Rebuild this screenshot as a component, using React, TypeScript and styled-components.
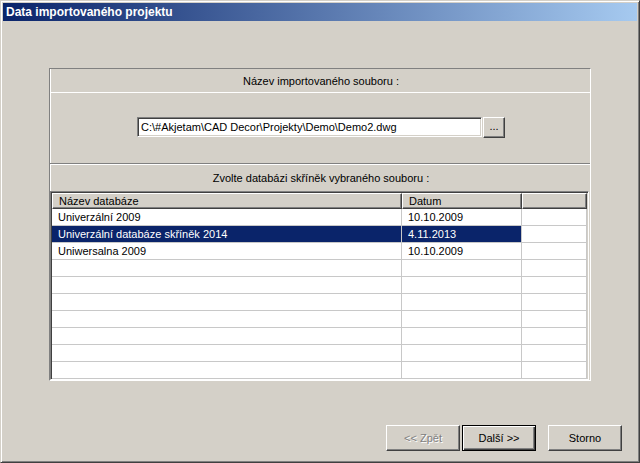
import React from 'react';
import styled, { createGlobalStyle } from 'styled-components';

const GlobalStyle = createGlobalStyle`
  html, body {
    margin: 0;
    padding: 0;
    background: #d4d0c8;
  }
  * {
    box-sizing: border-box;
  }
`;

type Row = { name: string; date: string; selected?: boolean };

const rows: Row[] = [
  { name: 'Univerzální 2009', date: '10.10.2009' },
  { name: 'Univerzální databáze skříněk 2014', date: '4.11.2013', selected: true },
  { name: 'Uniwersalna 2009', date: '10.10.2009' },
  { name: '', date: '' },
  { name: '', date: '' },
  { name: '', date: '' },
  { name: '', date: '' },
  { name: '', date: '' },
  { name: '', date: '' },
  { name: '', date: '' },
];

const App = () => {
  return (
    <>
      <GlobalStyle />
      <Window>
        <TitleBar>Data importovaného projektu</TitleBar>
        <Content>
          <Panel>
            <SectionHeader $height={23}>Název importovaného souboru :</SectionHeader>
            <FileSection>
              <PathInput>C:\#Akjetam\CAD Decor\Projekty\Demo\Demo2.dwg</PathInput>
              <BrowseButton>...</BrowseButton>
            </FileSection>
            <SectionHeader $height={27} $raised>
              Zvolte databázi skříněk vybraného souboru :
            </SectionHeader>
            <ListView>
              <HeaderRow>
                <HeaderCell>Název databáze</HeaderCell>
                <HeaderCell>Datum</HeaderCell>
                <HeaderCell />
              </HeaderRow>
              {rows.map((row, i) => (
                <DataRow key={i}>
                  <Cell $selected={row.selected}>{row.name}</Cell>
                  <Cell $selected={row.selected}>{row.date}</Cell>
                  <Cell />
                </DataRow>
              ))}
            </ListView>
          </Panel>
          <Footer>
            <Button disabled>&lt;&lt; Zpět</Button>
            <Button $default>Další &gt;&gt;</Button>
            <Button $wide>Storno</Button>
          </Footer>
        </Content>
      </Window>
    </>
  );
};

export default App;

const Window = styled.div`
  width: 640px;
  height: 463px;
  display: flex;
  flex-direction: column;
  padding: 2px;
  background: #d4d0c8;
  border: 1px solid;
  border-color: #d4d0c8 #404040 #404040 #d4d0c8;
  box-shadow: inset 1px 1px 0 #ffffff, inset -1px -1px 0 #808080;
  font-family: 'Liberation Sans', Arial, sans-serif;
  font-size: 11px;
  color: #000000;
`;

const TitleBar = styled.div`
  height: 18px;
  flex-shrink: 0;
  display: flex;
  align-items: center;
  padding-left: 3px;
  background: linear-gradient(to right, #0a246a, #a6caf0);
  color: #ffffff;
  font-weight: bold;
  font-size: 12px;
`;

const Content = styled.div`
  flex: 1;
  display: flex;
  flex-direction: column;
  padding: 47px 0 0 46px;
`;

const Panel = styled.div`
  width: 542px;
  display: flex;
  flex-direction: column;
  border: 1px solid;
  border-color: #808080 #ffffff #ffffff #808080;
  box-shadow: inset 1px 0 0 #ffffff;
`;

const SectionHeader = styled.div<{ $height: number; $raised?: boolean }>`
  height: ${(p) => p.$height}px;
  display: flex;
  align-items: center;
  justify-content: center;
  padding-left: 2px;
  border-top: ${(p) => (p.$raised ? '1px solid #ffffff' : 'none')};
`;

const FileSection = styled.div`
  height: 72px;
  display: flex;
  align-items: center;
  justify-content: center;
  padding: 0 0 2px 2px;
  border-top: 1px solid #ffffff;
  border-bottom: 1px solid #808080;
`;

const PathInput = styled.div`
  width: 345px;
  height: 20px;
  display: flex;
  align-items: center;
  padding-left: 3px;
  background: #ffffff;
  border: 1px solid;
  border-color: #808080 #ffffff #ffffff #808080;
  box-shadow: inset 1px 1px 0 #404040, inset -1px -1px 0 #d4d0c8;
  white-space: nowrap;
  overflow: hidden;
`;

const BrowseButton = styled.button`
  width: 22px;
  height: 21px;
  margin-left: 1px;
  padding: 0 0 3px;
  background: #d4d0c8;
  border: 1px solid;
  border-color: #ffffff #404040 #404040 #ffffff;
  box-shadow: inset -1px -1px 0 #808080;
  font-family: inherit;
  font-size: 11px;
  color: #000000;
`;

const ListView = styled.div`
  height: 189px;
  display: flex;
  flex-direction: column;
  margin: 0 1px 0 0;
  background: #ffffff;
  border: 1px solid;
  border-color: #808080 #ffffff #ffffff #808080;
  box-shadow: inset 1px 1px 0 #404040, inset -1px -1px 0 #d4d0c8;
  padding: 1px;
  overflow: hidden;
`;

const HeaderRow = styled.div`
  display: grid;
  grid-template-columns: 350px 120px 1fr;
  height: 16px;
  flex-shrink: 0;
`;

const HeaderCell = styled.div`
  display: flex;
  align-items: center;
  padding-left: 6px;
  background: #d4d0c8;
  border: 1px solid;
  border-color: #ffffff #404040 #404040 #ffffff;
  box-shadow: inset -1px -1px 0 #808080;
  white-space: nowrap;
`;

const DataRow = styled.div`
  display: grid;
  grid-template-columns: 350px 120px 1fr;
  height: 17px;
  flex-shrink: 0;
`;

const Cell = styled.div<{ $selected?: boolean }>`
  display: flex;
  align-items: center;
  padding-left: 6px;
  background: ${(p) => (p.$selected ? '#0a246a' : '#ffffff')};
  color: ${(p) => (p.$selected ? '#ffffff' : '#000000')};
  border-right: 1px solid #c8c8c8;
  border-bottom: 1px solid #c8c8c8;
  white-space: nowrap;
`;

const Footer = styled.div`
  display: flex;
  justify-content: flex-end;
  align-items: center;
  margin-top: 44px;
  padding-right: 15px;
`;

const Button = styled.button<{ $default?: boolean; $wide?: boolean }>`
  width: 74px;
  height: 26px;
  margin-left: ${(p) => (p.$wide ? '12px' : '2px')};
  padding: 0;
  background: #d4d0c8;
  font-family: inherit;
  font-size: 11px;
  color: #000000;
  border: 1px solid;
  border-color: ${(p) => (p.$default ? '#000000' : '#ffffff #404040 #404040 #ffffff')};
  box-shadow: ${(p) =>
    p.$default
      ? 'inset 1px 1px 0 #ffffff, inset -1px -1px 0 #404040, inset -2px -2px 0 #808080'
      : 'inset -1px -1px 0 #808080'};

  &:disabled {
    color: #808080;
    text-shadow: 1px 1px 0 #ffffff;
  }
`;
